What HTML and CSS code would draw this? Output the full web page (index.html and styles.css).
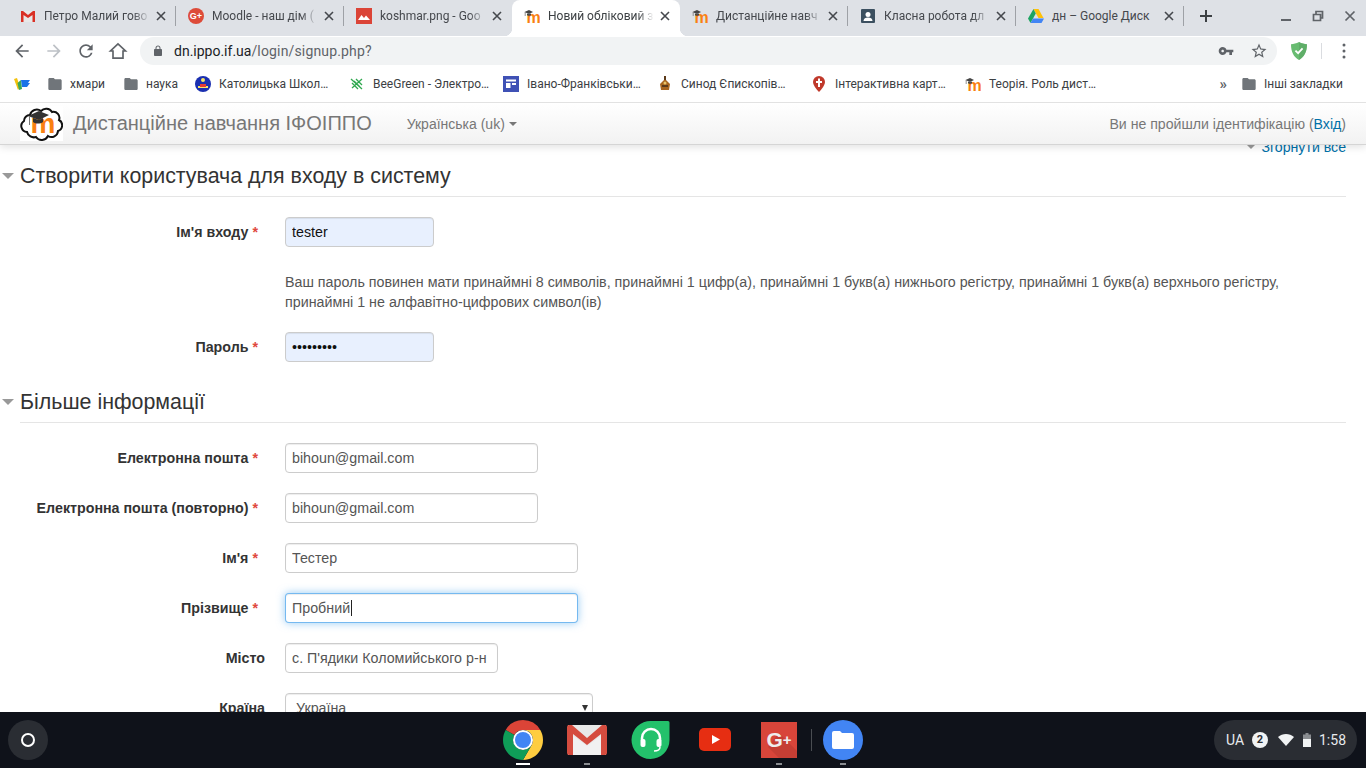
FILE: index.html
```html
<!DOCTYPE html>
<html lang="uk">
<head>
<meta charset="utf-8">
<title>Новий обліковий запис</title>
<link rel="stylesheet" href="styles.css">
</head>
<body>
<svg class="defs" aria-hidden="true">
  <symbol id="close" viewBox="0 0 10 10"><path d="M1 1l8 8M9 1l-8 8" fill="none" stroke="currentColor" stroke-width="1.6"/></symbol>
  <symbol id="folder" viewBox="0 0 24 24"><path fill="#70757a" d="M10 3H4C2.9 3 2 3.900 2 5v14c0 1.100.9 2 2 2h16c1.100 0 2-.9 2-2V7c0-1.100-.9-2-2-2h-8l-2-2z"/></symbol>
  <symbol id="moodle" viewBox="0 0 16 16"><text x="9.500" y="14.500" text-anchor="middle" class="fav-m">m</text><path fill="#444" d="M5 2 .5 4 5 6 9 4z"/><path d="M1.200 4v4" stroke="#777" stroke-width=".8"/><path fill="#444" d="M3 5.500v1.700c1.300.7 2.700.7 4 0V5.500L5 6.300z"/></symbol>
</svg>

<header class="tabstrip">
  <div class="tab">
    <svg class="fav" viewBox="0 0 16 16"><path fill="#e8e8e8" d="M1 3h14v11H1z"/><path fill="#d93025" d="M1 3h2l5 4 5-4h2v11h-2.500V7L8 10 3.500 7v7H1z"/></svg>
    <span class="tab-title">Петро Малий гово</span>
    <svg class="tab-x"><use href="#close"/></svg><i class="tab-sep"></i>
  </div>
  <div class="tab">
    <svg class="fav" viewBox="0 0 16 16"><circle cx="8" cy="8" r="8" fill="#dd4b39"/><text x="8" y="11" text-anchor="middle" class="fav-g">G+</text></svg>
    <span class="tab-title">Moodle - наш дім (</span>
    <svg class="tab-x"><use href="#close"/></svg><i class="tab-sep"></i>
  </div>
  <div class="tab">
    <svg class="fav" viewBox="0 0 16 16"><rect width="16" height="16" fill="#db4437"/><path fill="#fff" d="M2 12l3.500-5 2.500 3 2-2.500L14 12z"/></svg>
    <span class="tab-title">koshmar.png - Goo</span>
    <svg class="tab-x"><use href="#close"/></svg><i class="tab-sep tab-sep-off"></i>
  </div>
  <div class="tab tab-active">
    <svg class="fav"><use href="#moodle"/></svg>
    <span class="tab-title">Новий обліковий з</span>
    <svg class="tab-x"><use href="#close"/></svg><i class="tab-sep tab-sep-off"></i>
  </div>
  <div class="tab">
    <svg class="fav"><use href="#moodle"/></svg>
    <span class="tab-title">Дистанційне навч</span>
    <svg class="tab-x"><use href="#close"/></svg><i class="tab-sep"></i>
  </div>
  <div class="tab">
    <svg class="fav" viewBox="0 0 16 16"><rect x="1" y="1" width="14" height="14" rx="1" fill="#3c5060"/><circle cx="8" cy="6.500" r="2.500" fill="#fff"/><path fill="#fff" d="M3.500 13c0-2.500 2-3.500 4.500-3.500s4.500 1 4.500 3.500z"/></svg>
    <span class="tab-title">Класна робота дл</span>
    <svg class="tab-x"><use href="#close"/></svg><i class="tab-sep"></i>
  </div>
  <div class="tab">
    <svg class="fav" viewBox="0 0 16 16"><path fill="#ffc107" d="M5.500 1h5l5 9h-5z"/><path fill="#1da462" d="M5.500 1 0 10.500 2.500 15l5.300-9.500z"/><path fill="#4285f4" d="M5 10.500h11L13.500 15h-11z"/></svg>
    <span class="tab-title tab-title-full">дн – Google Диск</span>
    <svg class="tab-x"><use href="#close"/></svg><i class="tab-sep"></i>
  </div>
  <svg class="newtab" viewBox="0 0 12 12"><path d="M6 0v12M0 6h12" stroke="#3c4043" stroke-width="2"/></svg>
  <div class="winctl">
    <svg class="win-ico" viewBox="0 0 12 12"><path d="M1 10h10" stroke="#5f6368" stroke-width="2"/></svg>
    <svg class="win-ico" viewBox="0 0 12 12"><path d="M1.500 4.500h7v6h-7zM4 4V1.500h6.500V8H9" fill="none" stroke="#5f6368" stroke-width="1.700"/></svg>
    <svg class="win-ico" viewBox="0 0 12 12"><path d="M1.500 1.500l9 9M10.500 1.500l-9 9" stroke="#5f6368" stroke-width="1.700"/></svg>
  </div>
</header>

<nav class="toolbar">
  <svg class="nav-ico" viewBox="0 0 24 24"><path fill="#5f6368" d="M20 11H7.830l5.590-5.590L12 4l-8 8 8 8 1.410-1.410L7.830 13H20z"/></svg>
  <svg class="nav-ico" viewBox="0 0 24 24"><path fill="#bdc1c6" d="M12 4l-1.410 1.410L16.170 11H4v2h12.170l-5.580 5.590L12 20l8-8z"/></svg>
  <svg class="nav-ico" viewBox="0 0 24 24"><path fill="#5f6368" d="M17.650 6.350A7.958 7.958 0 0 0 12 4c-4.420 0-7.990 3.580-7.990 8s3.570 8 7.990 8c3.730 0 6.840-2.550 7.730-6h-2.080A5.990 5.990 0 0 1 12 18c-3.310 0-6-2.690-6-6s2.690-6 6-6c1.660 0 3.140.690 4.220 1.780L13 11h7V4z"/></svg>
  <svg class="nav-ico" viewBox="0 0 24 24"><path fill="none" stroke="#5f6368" stroke-width="2" d="M12 3.500 3 12h3v8.500h12V12h3z"/></svg>
  <div class="omnibox">
    <svg class="lock" viewBox="0 0 24 24"><path fill="#5f6368" d="M18 8h-1V6c0-2.760-2.240-5-5-5S7 3.240 7 6v2H6c-1.100 0-2 .9-2 2v10c0 1.100.9 2 2 2h12c1.100 0 2-.9 2-2V10c0-1.100-.9-2-2-2zM9 6c0-1.660 1.340-3 3-3s3 1.340 3 3v2H9z"/></svg>
    <span class="url"><b class="url-host">dn.ippo.if.ua</b><span class="url-path">/login/signup.php?</span></span>
    <svg class="omni-ico omni-key" viewBox="0 0 24 24"><path fill="#5f6368" d="M12.650 10C11.830 7.670 9.610 6 7 6c-3.310 0-6 2.690-6 6s2.690 6 6 6c2.610 0 4.830-1.670 5.650-4H17v4h4v-4h2v-4zM7 14c-1.100 0-2-.9-2-2s.9-2 2-2 2 .9 2 2-.9 2-2 2z"/></svg>
    <svg class="omni-ico omni-star" viewBox="0 0 24 24"><path fill="#5f6368" d="M22 9.240l-7.190-.62L12 2 9.190 8.630 2 9.240l5.460 4.730L5.820 21 12 17.270 18.180 21l-1.630-7.030zM12 15.400l-3.760 2.270 1-4.280-3.320-2.880 4.380-.38L12 6.100l1.710 4.040 4.380.38-3.320 2.880 1 4.280z"/></svg>
  </div>
  <svg class="shield" viewBox="0 0 18 20"><path fill="#68bc71" d="M9 0C6 1.500 3 2.300 0 2.500 0 11 3 17 9 20c6-3 9-9 9-17.500C15 2.300 12 1.500 9 0z"/><path fill="#5aa563" d="M9 0c3 1.500 6 2.300 9 2.500C18 11 15 17 9 20z" opacity=".6"/><path d="M5 9.500l3 3 5-5.500" fill="none" stroke="#fff" stroke-width="2"/></svg>
  <i class="tool-sep"></i>
  <svg class="menu-dots" viewBox="0 0 4 16"><circle cx="2" cy="2" r="1.500" fill="#5f6368"/><circle cx="2" cy="8" r="1.500" fill="#5f6368"/><circle cx="2" cy="14" r="1.500" fill="#5f6368"/></svg>
</nav>

<nav class="bookmarks">
  <span class="bm bm-apps"><svg class="fav" viewBox="0 0 16 16"><path fill="#f4c20d" d="M0 3l3-1 3 9-2 3z"/><path fill="#3aa757" d="M3.500 7 7 4l1 9-3 1z"/><path fill="#1a73e8" d="M7 4h9l-2 3h2l-3 4H8z"/></svg></span>
  <span class="bm bm-xm"><svg class="fav"><use href="#folder"/></svg><span>хмари</span></span>
  <span class="bm bm-nk"><svg class="fav"><use href="#folder"/></svg><span>наука</span></span>
  <span class="bm bm-wide"><svg class="fav" viewBox="0 0 16 16"><circle cx="8" cy="8" r="8" fill="#1a2fb0"/><circle cx="8" cy="4" r="2" fill="#f7e36a"/><path fill="#f7e36a" d="M3 10h10v2H3z"/><path fill="#e53935" d="M5 8h6v3H5z"/></svg><span>Католицька Школ…</span></span>
  <span class="bm bm-wide"><svg class="fav" viewBox="0 0 16 16"><path d="M2 3l11 10M3 12 13 3M5 5l6 6M7 3l6 6M3 7l6 6" fill="none" stroke="#2fa84f" stroke-width="1.300"/></svg><span>BeeGreen - Электро…</span></span>
  <span class="bm bm-wide"><svg class="fav" viewBox="0 0 16 16"><rect width="16" height="16" fill="#3f51b5"/><path fill="#fff" d="M3 3.500h10v2H3zM3 7h4.500v5H3zM9 7h4v2H9z"/></svg><span>Івано-Франківськи…</span></span>
  <span class="bm bm-wide"><svg class="fav" viewBox="0 0 16 16"><path fill="#a8651f" d="M8 3l5 5-1 6H4L3 8z"/><path fill="#5b3a1a" d="M7 0h2v4H7zM5 9h6v2H5z"/><circle cx="8" cy="7" r="1.500" fill="#e9c46a"/></svg><span>Синод Єпископів…</span></span>
  <span class="bm bm-wide"><svg class="fav" viewBox="0 0 16 16"><path fill="#c0392b" d="M8 0a6 6 0 0 0-6 6c0 4 6 10 6 10s6-6 6-10a6 6 0 0 0-6-6z"/><path fill="#fff" d="M7 2.500h2V5h2v2H9v4H7V7H5V5h2z"/></svg><span>Інтерактивна карт…</span></span>
  <span class="bm bm-wide"><svg class="fav"><use href="#moodle"/></svg><span>Теорія. Роль дист…</span></span>
  <span class="bm-more">»</span>
  <span class="bm bm-other"><svg class="fav"><use href="#folder"/></svg><span>Інші закладки</span></span>
</nav>

<main class="page">
  <div class="page-head">
    <svg class="logo" viewBox="0 0 43 35">
      <rect width="43" height="35" fill="#fff"/>
      <path fill="#fff" stroke="#111" stroke-width="2" d="M10 9a7 7 0 0 1 11-4 7 7 0 0 1 11 1 6 6 0 0 1 7 8 6 6 0 0 1-1 11 6.500 6.500 0 0 1-10 5 7 7 0 0 1-12 1 7 7 0 0 1-9-5 6 6 0 0 1-3-11 6 6 0 0 1 6-6z"/>
      <text x="23" y="27" text-anchor="middle" class="logo-m">m</text>
      <path fill="#333" d="M19 5 8 10l11 4 10-5z"/>
      <path d="M9.500 10v9" stroke="#777"/>
      <path fill="#333" d="M13 12v4c3 2 7 2 10 0v-4l-4 2z"/>
    </svg>
    <a class="brand">Дистанційне навчання ІФОІППО</a>
    <span class="lang">Українська ‎(uk)‎<i class="caret-down"></i></span>
    <span class="login">Ви не пройшли ідентифікацію (<a class="link">Вхід</a>)</span>
  </div>
  <div class="scroller">
    <div class="collapse-row"><i class="tri tri-sm"></i><a class="link">Згорнути все</a></div>

    <h2 class="legend"><i class="tri"></i>Створити користувача для входу в систему</h2>
    <div class="fields">
      <div class="row">
        <label class="lbl">Ім'я входу<span class="req">*</span></label>
        <input class="field w149 autofill" value="tester" readonly>
      </div>
      <p class="help">Ваш пароль повинен мати принаймні 8 символів, принаймні 1 цифр(а), принаймні 1 букв(а) нижнього регістру, принаймні 1 букв(а) верхнього регістру, принаймні 1 не алфавітно-цифрових символ(ів)</p>
      <div class="row">
        <label class="lbl">Пароль<span class="req">*</span></label>
        <input class="field w149 autofill" type="password" value="123456789" readonly>
      </div>
    </div>

    <h2 class="legend"><i class="tri"></i>Більше інформації</h2>
    <div class="fields">
      <div class="row">
        <label class="lbl">Електронна пошта<span class="req">*</span></label>
        <input class="field w253" value="bihoun@gmail.com" readonly>
      </div>
      <div class="row">
        <label class="lbl">Електронна пошта (повторно)<span class="req">*</span></label>
        <input class="field w253" value="bihoun@gmail.com" readonly>
      </div>
      <div class="row">
        <label class="lbl">Ім'я<span class="req">*</span></label>
        <input class="field w293" value="Тестер" readonly>
      </div>
      <div class="row">
        <label class="lbl">Прізвище<span class="req">*</span></label>
        <div class="focus-wrap">
          <input class="field w293 focused" value="Пробний" readonly>
          <i class="text-caret"></i>
        </div>
      </div>
      <div class="row">
        <label class="lbl">Місто</label>
        <input class="field w213" value="с. П'ядики Коломийського р-н" readonly>
      </div>
      <div class="row">
        <label class="lbl">Країна</label>
        <div class="sel-wrap">
          <select class="field w308 sel"><option>Україна</option></select>
        </div>
      </div>
    </div>
  </div>
</main>

<footer class="shelf">
  <div class="launcher-cell"><span class="launcher"><i class="launcher-ring"></i></span></div>
  <div class="dock">
    <div class="dock-cell">
      <svg class="app" viewBox="0 0 40 40">
        <path fill="#db4437" d="M20 0a20 20 0 0 1 17.320 10H20a10 10 0 0 0-8.660 5L2.680 10A20 20 0 0 1 20 0z"/>
        <path fill="#ffcd40" d="M20 10h17.320A20 20 0 0 1 20 40l8.660-15A10 10 0 0 0 20 10z"/>
        <path fill="#0f9d58" d="M2.680 10A20 20 0 0 0 20 40l8.660-15a10 10 0 0 1-17.320-10z"/>
        <circle cx="20" cy="20" r="10" fill="#fff"/><circle cx="20" cy="20" r="8" fill="#4285f4"/>
      </svg>
      <i class="dot dot-on"></i>
    </div>
    <div class="dock-cell">
      <svg class="app" viewBox="0 0 40 40">
        <path fill="#e8e8e8" d="M1 5h38v30H1z"/><path fill="#f7f7f7" d="M1 35V12l19 14 19-14v23z" opacity=".6"/>
        <path fill="#d54c3f" d="M2 5h3l15 13L35 5h3a2 2 0 0 1 2 2v26a2 2 0 0 1-2 2h-4V14L20 25 6 14v21H2a2 2 0 0 1-2-2V7a2 2 0 0 1 2-2z"/>
      </svg>
      <i class="dot"></i>
    </div>
    <div class="dock-cell">
      <svg class="app" viewBox="0 0 40 40">
        <path fill="#23c16b" d="M20 1h17a1.500 1.500 0 0 1 1.500 1.500V20A19 19 0 1 1 20 1z"/>
        <path fill="none" stroke="#fff" stroke-width="2.500" d="M11 21v-3a9 9 0 0 1 18 0v3"/>
        <rect x="9.500" y="19" width="5" height="8" rx="2" fill="#fff"/><rect x="25.500" y="19" width="5" height="8" rx="2" fill="#fff"/>
        <path fill="none" stroke="#fff" stroke-width="1.500" d="M29 27c0 3-2 4-6 4"/>
      </svg>
      <i class="dot dot-none"></i>
    </div>
    <div class="dock-cell">
      <svg class="app" viewBox="0 0 40 40"><rect x="4" y="8" width="32" height="23" rx="5" fill="#e62e12"/><path fill="#fff" d="M17 15v9l8-4.500z"/></svg>
      <i class="dot dot-none"></i>
    </div>
    <div class="dock-cell">
      <svg class="app" viewBox="0 0 40 40"><rect x="2" y="2" width="36" height="36" fill="#d8453a"/><path fill="#b93a31" d="M9 27l11-14 18 18v7H20z" opacity=".6"/><text x="20" y="27" text-anchor="middle" class="app-g">G<tspan class="app-plus" dy="-2">+</tspan></text></svg>
      <i class="dot"></i>
    </div>
    <i class="dock-sep"></i>
    <div class="dock-cell">
      <svg class="app" viewBox="0 0 40 40"><circle cx="20" cy="20" r="20" fill="#4285f4"/><path fill="#fff" d="M17 11h-6a2 2 0 0 0-2 2v14a2 2 0 0 0 2 2h18a2 2 0 0 0 2-2V15a2 2 0 0 0-2-2h-10z"/></svg>
      <i class="dot"></i>
    </div>
  </div>
  <div class="tray">
    <span class="tray-ua">UA</span>
    <span class="badge">2</span>
    <svg class="wifi" viewBox="0 0 16 12"><path fill="#f1f3f4" d="M8 12 0 3c4.500-4 11.500-4 16 0z"/></svg>
    <svg class="batt" viewBox="0 0 8 14"><path fill="#8a8d91" d="M2.500 0h3v1.500H8V6H0V1.500h2.500z"/><path fill="#f1f3f4" d="M0 6h8v8H0z"/></svg>
    <span class="clock">1:58</span>
  </div>
</footer>
</body>
</html>
```

FILE: styles.css
```css
* { box-sizing: border-box; }
html, body { margin: 0; height: 100%; }
body {
  width: 1366px;
  height: 768px;
  overflow: hidden;
  display: flex;
  flex-direction: column;
  background: #fff;
  font-family: "Liberation Sans", Arial, sans-serif;
}
.defs { position: absolute; width: 0; height: 0; }
.fav { width: 16px; height: 16px; flex: none; }
.fav-m { font: bold 16px "Liberation Sans", sans-serif; fill: #f98012; }
.fav-g { font: bold 9px "Liberation Sans", sans-serif; fill: #fff; }

/* Tab strip */
.tabstrip {
  height: 36px;
  flex: none;
  display: flex;
  align-items: stretch;
  padding-left: 8px;
  background: #dee1e6;
  font: 12px Roboto, sans-serif;
  color: #45484d;
}
.tab {
  position: relative;
  width: 168px;
  flex: none;
  display: flex;
  align-items: center;
  padding: 0 0 5px 12px;
}
.tab-title {
  flex: 1;
  min-width: 0;
  margin-left: 8px;
  white-space: nowrap;
  overflow: hidden;
  -webkit-mask-image: linear-gradient(to right, #000 84%, transparent);
  mask-image: linear-gradient(to right, #000 84%, transparent);
}
.tab-title-full { -webkit-mask-image: none; mask-image: none; }
.tab-x { width: 10px; height: 10px; flex: none; margin: 0 9px 0 6px; color: #45484d; }
.tab-sep { width: 1px; height: 20px; background: #9ea1a6; flex: none; }
.tab-sep-off { background: transparent; }
.tab-active {
  background: #fff;
  border-radius: 8px 8px 0 0;
  color: #3c4043;
}
.tab-active::before, .tab-active::after {
  content: "";
  position: absolute;
  bottom: 0;
  width: 8px;
  height: 8px;
}
.tab-active::before { left: -8px; background: radial-gradient(circle at 0 0, #dee1e6 8px, #fff 8.5px); }
.tab-active::after { right: -8px; background: radial-gradient(circle at 100% 0, #dee1e6 8px, #fff 8.5px); }
.newtab { width: 12px; height: 12px; flex: none; align-self: center; margin: 0 0 5px 16px; }
.winctl { display: flex; align-items: center; margin-left: auto; padding: 0 10px 4px 0; gap: 20px; }
.win-ico { width: 12px; height: 12px; flex: none; }

/* Toolbar */
.toolbar {
  height: 35px;
  flex: none;
  display: flex;
  align-items: center;
  padding: 0 0 5px 12px;
  background: #fff;
}
.nav-ico { width: 20px; height: 20px; flex: none; margin-right: 12px; }
.omnibox {
  width: 1137px;
  height: 28px;
  flex: none;
  display: flex;
  align-items: center;
  padding: 0 9px 0 12px;
  border-radius: 14px;
  background: #f1f3f4;
}
.lock { width: 12px; height: 12px; flex: none; }
.url { margin-left: 10px; font: 14px Roboto, sans-serif; color: #5f6368; }
.url-host { font-weight: 400; color: #202124; }
.url-path { letter-spacing: .16px; }
.omni-ico { flex: none; }
.omni-key { width: 16px; height: 16px; margin-left: auto; margin-right: 16px; }
.omni-star { width: 18px; height: 18px; }
.shield { width: 16px; height: 18px; flex: none; margin-left: 14px; }
.tool-sep { width: 1px; height: 16px; background: #dadce0; flex: none; margin-left: 14px; }
.menu-dots { width: 4px; height: 16px; flex: none; margin-left: 20px; }

/* Bookmarks */
.bookmarks {
  height: 31px;
  flex: none;
  display: flex;
  align-items: center;
  padding: 0 0 5px 14px;
  font: 12px Roboto, sans-serif;
  color: #3c4043;
  background: #fff;
}
.bm { display: flex; align-items: center; gap: 7px; flex: none; white-space: nowrap; }
.bm-apps { width: 33px; }
.bm-xm { width: 76px; }
.bm-nk { width: 72px; }
.bm-wide { width: 154px; gap: 8px; }
.bm-more { margin-left: auto; font-size: 15px; font-weight: 700; color: #5f6368; margin-right: 14px; }
.bm-other { margin-right: 23px; }

/* Page */
.page { flex: 1; min-height: 0; display: flex; flex-direction: column; background: #fff; overflow: hidden; border-top: 1px solid #e2e2e2; }
.page-head {
  position: relative;
  z-index: 1;
  height: 42px;
  flex: none;
  display: flex;
  align-items: center;
  padding: 0 20px;
  background: linear-gradient(#fff, #f2f2f2);
  border-bottom: 1px solid #d5d5d5;
  box-shadow: 0 2px 8px rgba(0,0,0,.12);
}
.logo { width: 43px; height: 35px; flex: none; }
.logo-m { font: bold 28px "Liberation Sans", sans-serif; fill: #f98012; }
.brand { margin-left: 10px; font-size: 20px; color: #777; white-space: nowrap; }
.lang { margin-left: 35px; font-size: 14px; color: #777; display: flex; align-items: center; }
.caret-down { width: 0; height: 0; margin-left: 4px; border: 4px solid transparent; border-top-color: #777; border-bottom-width: 0; }
.login { margin-left: auto; font-size: 14.120px; color: #777; }
.link { color: #0070a8; }

.scroller { flex: 1; min-height: 0; overflow: hidden; padding: 0 20px 0 2px; color: #333; }
.collapse-row { margin-top: -8px; height: 19px; display: flex; justify-content: flex-end; align-items: center; font-size: 14.150px; }
.tri { width: 0; height: 0; flex: none; margin-right: 6px; border: 6px solid transparent; border-top: 6px solid #999; border-bottom-width: 0; }
.tri-sm { border-width: 5px; border-bottom-width: 0; margin-right: 5px; }
.legend {
  margin: 0;
  height: 40px;
  display: flex;
  align-items: center;
  font-size: 21.400px;
  font-weight: 400;
  color: #333;
}
.fields { margin-left: 18px; padding-top: 20px; border-top: 1px solid #e5e5e5; }
.row { display: flex; align-items: center; height: 30px; margin-bottom: 20px; }
.lbl {
  width: 265px;
  margin-left: -20px;
  margin-right: 20px;
  flex: none;
  text-align: right;
  font-size: 14.250px;
  font-weight: 700;
  color: #333;
  white-space: nowrap;
}
.req { margin: 0 7px 0 4px; color: #e0483e; font-weight: 700; }
.field {
  display: block;
  height: 30px;
  padding: 4px 6px;
  border: 1px solid #ccc;
  border-radius: 4px;
  background: #fff;
  color: #555;
  font: 14.270px "Liberation Sans", Arial, sans-serif;
  outline: none;
  box-shadow: inset 0 1px 1px rgba(0,0,0,.075);
}
.autofill { background: #e8f0fe; color: #111; }
.w149 { width: 149px; }
.w213 { width: 213px; }
.w253 { width: 253px; }
.w293 { width: 293px; }
.w308 { width: 308px; }
.sel { padding-left: 10px; appearance: none; -webkit-appearance: none; }
.sel-wrap { position: relative; }
.sel-wrap::after {
  content: "";
  position: absolute;
  right: 5px;
  top: 12px;
  border: 3.500px solid transparent;
  border-top: 6px solid #333;
  border-bottom-width: 0;
}
.focused { border-color: rgba(82,168,236,.8); box-shadow: inset 0 1px 1px rgba(0,0,0,.075), 0 0 8px rgba(82,168,236,.6); }
.focus-wrap { position: relative; }
.text-caret { position: absolute; left: 66px; top: 7px; width: 1px; height: 16px; background: #222; }
.help { margin: 25px 0 20px 265px; font-size: 14.270px; line-height: 20px; color: #555; }

/* Shelf */
.shelf {
  position: relative;
  z-index: 2;
  height: 56px;
  flex: none;
  display: grid;
  grid-template-columns: 491px 384px 1fr;
  background: #0f121a;
}
.launcher-cell { padding: 8px 0 0 8px; }
.launcher { display: flex; align-items: center; justify-content: center; width: 40px; height: 40px; border-radius: 50%; background: #2a2d33; }
.launcher-ring { width: 14px; height: 14px; border: 2px solid #fff; border-radius: 50%; }
.dock { display: flex; position: relative; }
.dock-cell { width: 64px; flex: none; display: flex; flex-direction: column; align-items: center; padding-top: 8px; }
.app { width: 40px; height: 40px; flex: none; }
.app-g { font: bold 21px "Liberation Sans", sans-serif; fill: #eee; }
.app-plus { font-size: 15px; }
.dot { width: 6px; height: 2px; margin-top: 3px; background: #8a8d91; }
.dot-on { width: 14px; background: #fff; }
.dot-none { background: transparent; }
.dock-sep { position: absolute; left: 320px; top: 17px; width: 1px; height: 22px; background: #4a4d52; }
.tray {
  justify-self: end;
  width: 143px;
  height: 40px;
  margin: 8px 9px 0 0;
  display: flex;
  align-items: center;
  padding: 0 11px 0 12px;
  border-radius: 20px;
  background: #2a2d33;
  color: #e8eaed;
  font: 14px Roboto, sans-serif;
}
.tray-ua { width: 18px; }
.badge { width: 16px; height: 16px; margin-left: 8px; border-radius: 50%; background: #f1f3f4; color: #2a2d33; font-size: 11px; font-weight: 700; line-height: 16px; text-align: center; }
.wifi { width: 16px; height: 12px; margin-left: 10px; flex: none; }
.batt { width: 8px; height: 14px; margin-left: 9px; flex: none; }
.clock { margin-left: auto; font-size: 14px; }
```
